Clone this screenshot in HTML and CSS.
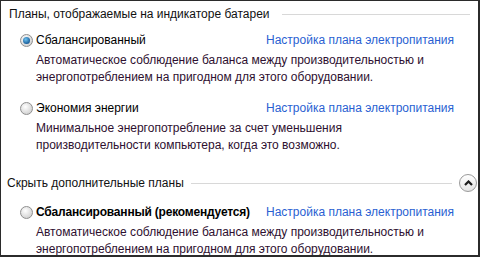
FILE: index.html
```html
<!DOCTYPE html>
<html lang="ru">
<head>
    <meta charset="UTF-8">
    <title>Планы электропитания</title>
    <link rel="stylesheet" href="styles.css">
</head>
<body>
    <div class="panel">
        <div class="group-head first">
            <span class="group-title">Планы, отображаемые на индикаторе батареи</span>
            <span class="group-line"></span>
        </div>

        <div class="plan">
            <span class="radio checked"></span>
            <span class="plan-name">Сбалансированный</span>
            <a class="plan-link" href="#">Настройка плана электропитания</a>
            <p class="plan-desc">Автоматическое соблюдение баланса между производительностью и энергопотреблением на пригодном для этого оборудовании.</p>
        </div>

        <div class="plan second">
            <span class="radio"></span>
            <span class="plan-name">Экономия энергии</span>
            <a class="plan-link" href="#">Настройка плана электропитания</a>
            <p class="plan-desc">Минимальное энергопотребление за счет уменьшения<br>производительности компьютера, когда это возможно.</p>
        </div>

        <div class="group-head extra">
            <span class="group-title">Скрыть дополнительные планы</span>
            <span class="group-line"></span>
            <button class="collapse" type="button">
                <svg width="9" height="6" viewBox="0 0 9 6"><path d="M1 5 L4.5 1.5 L8 5" fill="none" stroke="#1c1c1c" stroke-width="2.2"/></svg>
            </button>
        </div>

        <div class="plan third">
            <span class="radio"></span>
            <span class="plan-name bold">Сбалансированный (рекомендуется)</span>
            <a class="plan-link" href="#">Настройка плана электропитания</a>
            <p class="plan-desc">Автоматическое соблюдение баланса между производительностью и энергопотреблением на пригодном для этого оборудовании.</p>
        </div>
    </div>
</body>
</html>
```

FILE: styles.css
```css
body {
    margin: 0;
    font-family: 'Liberation Sans', Arial, sans-serif;
    font-size: 12px;
    line-height: 16px;
    color: #000;
}

.panel {
    width: 480px;
    height: 257px;
    box-sizing: border-box;
    border: solid #2b2b2b;
    border-width: 1px 2px 2px 1px;
    background-color: #fff;
    padding: 5px 8px 0 7px;
    overflow: hidden;
}

.group-head {
    display: flex;
    align-items: center;
}

.group-head.first {
    padding-left: 1px;
}

.group-head.extra {
    margin-left: -1px;
    margin-top: 21px;
    height: 18px;
}

.group-title {
    white-space: nowrap;
    color: #111;
}

.group-line {
    flex: 1;
    border-top: 1px solid #d8d8d8;
    margin-left: 12px;
}

.extra .group-line {
    margin-left: 7px;
}

.collapse {
    width: 18px;
    height: 18px;
    margin: 0 -7px 0 7px;
    padding: 0;
    border: 1px solid #9a9a9a;
    border-radius: 50%;
    background: linear-gradient(#ffffff, #e4e4e4);
    display: flex;
    align-items: center;
    justify-content: center;
}

.plan {
    display: grid;
    grid-template-columns: 13px 227px auto;
    column-gap: 3px;
    align-items: center;
    margin-top: 10px;
    padding-left: 12px;
}

.plan.second {
    margin-top: 15px;
}

.plan.third {
    margin-top: 12px;
}

.radio {
    width: 11px;
    height: 11px;
    border: 1px solid #8f8f8f;
    border-radius: 50%;
    background: radial-gradient(circle at 40% 35%, #ffffff, #d6d6d6 70%, #c4c4c4);
    position: relative;
}

.radio.checked::after {
    content: '';
    position: absolute;
    left: 2px;
    top: 2px;
    width: 7px;
    height: 7px;
    border-radius: 50%;
    background: radial-gradient(circle at 40% 35%, #6fc3f0, #1a5f9c 70%, #0d3f6e);
}

.plan-name {
    white-space: nowrap;
}

.plan-name.bold {
    font-weight: bold;
    letter-spacing: -0.2px;
}

.plan-link {
    color: #2a5fd2;
    text-decoration: none;
    white-space: nowrap;
}

.plan-desc {
    grid-column: 2 / -1;
    margin: 4px 0 0;
    color: #2e1030;
    width: 400px;
    line-height: 16.5px;
}
```
